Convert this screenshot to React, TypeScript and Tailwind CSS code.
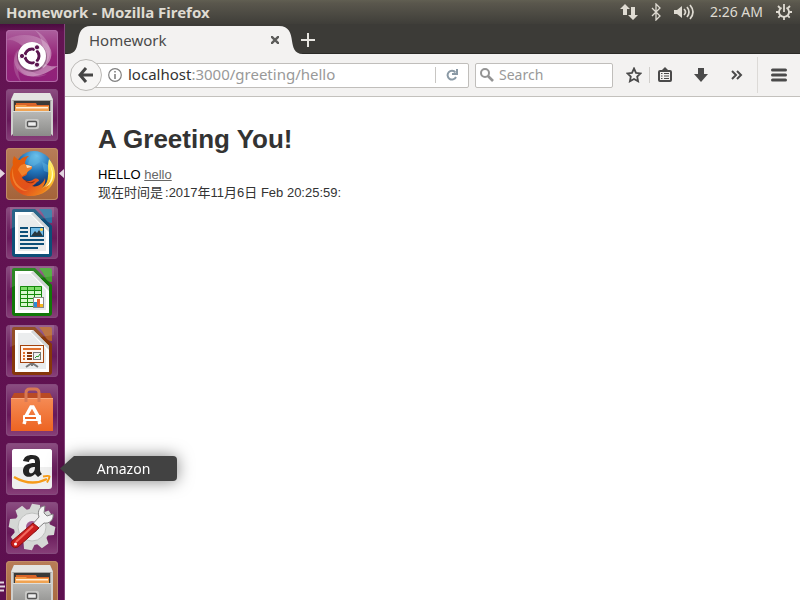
import type { ReactNode } from "react";

const UI = "font-['Noto_Sans','Noto_Sans_CJK_SC',sans-serif]";

function Files() {
  return (
    <svg viewBox="0 0 52 52" className="size-full">
      <defs>
        <linearGradient id="cab" x1="0" y1="0" x2="0" y2="1">
          <stop offset="0" stopColor="#b9b9b7" />
          <stop offset="1" stopColor="#8b8b89" />
        </linearGradient>
      </defs>
      <path d="M8 4h36l3 6v35H5V10z" fill="#a5a5a3" />
      <path d="M8 4h36l3 7H5z" fill="#e4e4e2" />
      <path d="M8 12h36v12H8z" fill="#3a3a38" />
      <path d="M10 14h20l1 2h12v8H9z" fill="#d9652a" />
      <path d="M9 16h11l1 1h22v7H9z" fill="#f39a45" />
      <path d="M10 18h32v1.500H10z" fill="#fff0dc" />
      <path d="M9 20h34v3H9z" fill="#f0a352" />
      <path d="M7 22h38v25H7z" fill="url(#cab)" />
      <path d="M7 22h38v1H7z" fill="#dededc" />
      <path d="M5 10v37l2-2V12zM47 10v37l-2-2V12z" fill="#cfcfcd" />
      <rect x="19" y="30" width="14" height="10" rx="2" fill="#c9c9c7" />
      <rect x="21.500" y="32.500" width="9" height="5" rx="1" fill="#eee" stroke="#555" strokeWidth="1.400" />
    </svg>
  );
}

function Ubuntu() {
  return (
    <svg viewBox="0 0 52 52" className="size-full">
      <defs>
        <linearGradient id="swirl" x1="0" y1="0" x2="1" y2="1">
          <stop offset="0" stopColor="#fff" stopOpacity=".08" />
          <stop offset="1" stopColor="#fff" stopOpacity=".5" />
        </linearGradient>
      </defs>
      <path d="M0 10C17 0 40 6 45 20c2 8-3 15-8 18L18 18C13 12 6 9 0 10z" fill="url(#swirl)" />
      <path d="M29 0c9 5 15 13 15 22 0 8-5 14-11 17l4-21C36 10 34 5 29 0z" fill="#fff" opacity=".22" />
      <path d="M8 28c0 12 9 20 21 18 9-1 15-5 23-10-9 1-14-1-19-7L13 19c-3 2-5 5-5 9z" fill="url(#swirl)" />
      <path d="M15 52C6 43 5 27 14 19l8 19c5 6 13 8 19 6-9 6-23 3-29-6 0 5 1 9 3 14z" fill="#fff" opacity=".16" />
      <circle cx="26" cy="27" r="15" fill="#35092c" opacity=".35" />
      <circle cx="26" cy="26" r="14" fill="#fff" />
      <circle cx="26" cy="26" r="7" fill="none" stroke="#5b1550" strokeWidth="3" />
      <path d="M26 26 15 26M26 26l6-10M26 26l6 10" stroke="#fff" strokeWidth="1.500" />
      <circle cx="26" cy="26" r="5.200" fill="#fff" />
      <g fill="#5b1550" stroke="#fff" strokeWidth="1">
        <circle cx="16" cy="26" r="2.600" />
        <circle cx="31" cy="17.300" r="2.600" />
        <circle cx="31" cy="34.700" r="2.600" />
      </g>
    </svg>
  );
}

function Firefox() {
  return (
    <svg viewBox="0 0 52 52" className="size-full">
      <defs>
        <radialGradient id="globe" cx=".55" cy=".15" r=".8">
          <stop offset="0" stopColor="#6fc5ef" />
          <stop offset=".5" stopColor="#2273b8" />
          <stop offset="1" stopColor="#102b61" />
        </radialGradient>
        <linearGradient id="fox" x1="0" y1="0" x2="1" y2="1">
          <stop offset="0" stopColor="#e66000" />
          <stop offset=".6" stopColor="#e2501c" />
          <stop offset="1" stopColor="#f39a1e" />
        </linearGradient>
        <linearGradient id="tail" x1="0" y1="0" x2="0" y2="1">
          <stop offset="0" stopColor="#fff27a" />
          <stop offset=".5" stopColor="#ffd335" />
          <stop offset="1" stopColor="#ee7c1b" />
        </linearGradient>
      </defs>
      <circle cx="28" cy="22" r="19" fill="url(#globe)" />
      <path d="M25 7c5 0 9 3 9 7l-6 4-6-2zM36 14l6 3 2 8-6-2z" fill="#5bb3df" opacity=".5" />
      <path d="M43 11c6 7 8 17 4 24-5 10-16 15-27 11 15-2 22-9 22-18 1-6-1-9 1-17z" fill="url(#tail)" />
      <path d="M8 8c2 2 4 4 6 4 3-3 6-4 9-4-3 2-4 5-4 8 2 2 6 1 7 3 1 2-5 4-5 6 0 3-3 3-5 4 1 4 7 6 12 2 3-1 5 0 5 2-2 0-4 4-7 5 5 2 12-3 13-8 1 4-1 8-4 11 3-1 7-4 9-9 0 9-9 16-20 16C13 48 3 38 4 26c0-4 2-7 3-9-1-3 0-6 1-9z" fill="url(#fox)" />
      <path d="M19 16c2 2 6 1 7 3 1 2-5 4-5 6l-5 3-4-6c1-4 4-6 7-6z" fill="#f0812a" />
      <path d="M18 31c4 4 8 4 12 1l-3 3c-4 1-7 0-9-4z" fill="#8f2e12" />
      <path d="M7 20c-1 12 5 20 15 23-8 1-19-8-15-23z" fill="#f7933b" opacity=".7" />
      <path d="M20 17c3 0 5 1 6 2l-5 1z" fill="#ffe0b8" />
      <path d="M44 17c4 9 1 18-5 22 8-2 11-13 5-22z" fill="#fffbb5" />
    </svg>
  );
}

function Sheet({ edge, fold, children }: { edge: string; fold: string; children: ReactNode }) {
  return (
    <svg viewBox="0 0 52 52" className="size-full">
      <path d="M8 2h21l17 17v28q0 3-3 3H9q-3 0-3-3V4q0-2 2-2z" fill={edge} />
      <path d="M33 2h11q2 0 2 2v12q-5 0-7-5t-6-9z" fill={fold} />
      <path d="M9 5h18l16 16v26H9z" fill="#fff" />
      <path d="M12 8h13l15 16v20H12z" fill="#e9ebec" />
      <path d="M27 5l16 16v4L25 7z" fill="#cfd3d4" />
      {children}
      <path d="M4 0h44v10Q26 12 4 22z" fill="#fff" opacity=".12" />
    </svg>
  );
}

function Writer() {
  return (
    <Sheet edge="#0d4f78" fold="#2a75a2">
      <path d="M14 21h8M14 25h8M14 29h8M14 33h24M14 37h24M14 41h18" stroke="#0d4f78" strokeWidth="2" />
      <rect x="24.500" y="20.500" width="13" height="9" fill="#74bce6" stroke="#0d4f78" />
      <path d="M25 29l4-5 2 2 2-3 4 6z" fill="#29383e" />
      <circle cx="35.500" cy="22.500" r="1.500" fill="#ffd24a" />
    </Sheet>
  );
}

function Calc() {
  return (
    <Sheet edge="#127709" fold="#43a52e">
      <rect x="14" y="20" width="22" height="20" fill="#d8f7cf" />
      <path d="M14 20h22v4H14z" fill="#80dd6b" />
      <path d="M14.500 20.500h21v20h-21zM14 24.500h22M14 28.500h22M14 32.500h22M14 36.500h22M21.500 20v20M28.500 20v20" fill="none" stroke="#16890c" />
      <rect x="27.500" y="31.500" width="10" height="10" fill="#fff" stroke="#888" />
      <path d="M28 36h3v5h-3z" fill="#2b8bd8" />
      <path d="M31 33h3v8h-3z" fill="#e8602c" />
      <path d="M34 38h3v3h-3z" fill="#f3b81f" />
    </Sheet>
  );
}

function Impress() {
  return (
    <Sheet edge="#86370b" fold="#b3622c">
      <path d="M26 38v3M20 42l6-4 6 4" fill="none" stroke="#777" strokeWidth="2" />
      <rect x="14.500" y="20.500" width="23" height="17" fill="#fff6ef" stroke="#a3430d" />
      <path d="M17 24h18" stroke="#e0702c" strokeWidth="2" />
      <path d="M17 28h2M17 31h2M17 34h2" stroke="#e0702c" strokeWidth="2" />
      <path d="M21 28h5M21 31h5M21 34h5" stroke="#86370b" strokeWidth="2" />
      <rect x="27.500" y="27.500" width="7" height="7" fill="#eee" stroke="#777" />
      <path d="M29 33l2-2 1 1 2-3" fill="none" stroke="#2d9c2d" />
    </Sheet>
  );
}

function Software() {
  return (
    <svg viewBox="0 0 52 52" className="size-full">
      <defs>
        <linearGradient id="bag" x1="0" y1="0" x2="0" y2="1">
          <stop offset="0" stopColor="#f58b55" />
          <stop offset="1" stopColor="#ed6422" />
        </linearGradient>
      </defs>
      <path d="M8 9h36l3 6H5z" fill="#b94a24" />
      <path d="M5 14h42v33H5z" fill="url(#bag)" />
      <path d="M5 14h42v1H5z" fill="#f8a77c" />
      <path d="M20 18V9q0-4 4-4h5q4 0 4 4v9" fill="none" stroke="#d77854" strokeWidth="3" />
      <path d="M20 32l5-9h2l5 9M19 37l-1 3M33 37l1 3" fill="none" stroke="#fff" strokeWidth="3.500" />
      <rect x="17" y="31" width="18" height="6" rx="1" fill="#fff" />
      <path d="M19 34h11" stroke="#ed6422" strokeWidth="2" />
    </svg>
  );
}

function Amazon() {
  return (
    <svg viewBox="0 0 52 52" className="size-full">
      <rect x="6" y="6" width="40" height="40" rx="3" fill="#efefef" />
      <path d="M6 24V9q0-3 3-3h34q3 0 3 3v15z" fill="#fff" />
      <path d="M17 18c1-4 4-6 9-6 6 0 8 3 8 7v8c0 2 1 3 2 4l-4 3c-1-1-2-2-3-3-5 5-12 3-12-3s5-8 12-8c0-3 0-4-3-4-2 0-3 1-3 3zM29 24c-4 0-6 1-6 4 0 4 6 3 6-4z" fill="#242424" fillRule="evenodd" />
      <path d="M8 34q17 10 33 2" fill="none" stroke="#f69b18" strokeWidth="2.500" />
      <path d="M37 33.500q6-1 6.500 0 0 2-2.500 6" fill="none" stroke="#f69b18" strokeWidth="2" />
    </svg>
  );
}

const teeth = [0, 45, 90, 135, 180, 225, 270, 315];

function Settings() {
  return (
    <svg viewBox="0 0 52 52" className="size-full">
      <g fill="#d5d7d5">
        {teeth.map((a) => (
          <path key={a} d="M22 2h8l3 11H19z" transform={`rotate(${a + 10} 26 25)`} />
        ))}
        <circle cx="26" cy="25" r="18" />
      </g>
      <circle cx="26" cy="25" r="14" fill="#ececec" stroke="#bfc1bf" />
      <circle cx="26" cy="25" r="6" fill="#a05b92" />
      <path d="M24 25l9-10c-2-6 1-11 6-11l-1 7 3 3 6-2c1 6-4 10-9 9L28 30z" fill="#f4f4f4" stroke="#858585" />
      <path d="M27 21l6 5-21 19q-4 2-6-1t0-5z" fill="#ca1d1d" stroke="#8f1010" />
      <path d="M27 24L10 40" stroke="#f26a5f" strokeWidth="2" />
      <circle cx="9.500" cy="42" r="1.500" fill="#fff" />
    </svg>
  );
}

const glass = "bg-[linear-gradient(#8c4f82,#702563_40%,#68195a_60%,#884079)] inset-ring-[#864a7d]";
const brown = "bg-[linear-gradient(#b87d58,#a46339)] inset-ring-[#c08b68]";
const launchers = [
  { name: "Search your computer", icon: <Ubuntu />, look: "bg-[linear-gradient(#ad609e,#942477_50%,#90217a)] inset-ring-[#b169a6]" },
  { name: "Files", icon: <Files />, look: glass },
  { name: "Firefox", icon: <Firefox />, look: brown, active: true },
  { name: "Writer", icon: <Writer />, look: glass },
  { name: "Calc", icon: <Calc />, look: glass },
  { name: "Impress", icon: <Impress />, look: glass },
  { name: "Software", icon: <Software />, look: glass },
  { name: "Amazon", icon: <Amazon />, look: glass, tip: "Amazon" },
  { name: "System Settings", icon: <Settings />, look: glass },
  { name: "File manager", icon: <Files />, look: brown, many: true },
];

function Launcher() {
  return (
    <nav className="relative z-10 w-[65px] shrink-0 border-r border-[#85457b] bg-[linear-gradient(#4b0b40,#641453_8px,#5d104f)] pt-1.5">
      <ul className="flex flex-col gap-[7px]">
        {launchers.map((l) => (
          <li key={l.name} className="relative px-1.5">
            <button aria-label={l.name} className={`block size-[52px] overflow-hidden rounded inset-ring ${l.look}`}>
              {l.icon}
            </button>
            {l.active && (
              <svg className="absolute inset-0 h-[52px] w-16" viewBox="0 0 64 52" fill="#e3d6e0">
                <path d="M0 21l5 4.500L0 30zM64 21l-5 4.500 5 4.500z" />
              </svg>
            )}
            {l.many && (
              <svg className="absolute inset-0 h-[52px] w-1.5" viewBox="0 0 6 52">
                <path d="M0 21.500h4M0 25.500h5M0 29.500h4" stroke="#e3d6e0" strokeWidth="2" />
              </svg>
            )}
            {l.tip && (
              <div role="tooltip" className="absolute top-[13px] left-[60px] flex h-[25px] w-[117px] drop-shadow-[0_0_8px_rgba(0,0,0,0.5)]">
                <svg className="h-full w-3.5 shrink-0" viewBox="0 0 14 25" fill="#424242">
                  <path d="M14 0v25L0 12.500z" />
                </svg>
                <span className="flex-1 rounded-r bg-[#424242] pr-1 text-center text-sm leading-[25px] text-white">{l.tip}</span>
              </div>
            )}
          </li>
        ))}
      </ul>
    </nav>
  );
}

function TopBar() {
  return (
    <header className="flex h-6 shrink-0 items-center bg-[linear-gradient(#615f52,#5a574d_3px,#3f3e39)] pr-2 pl-1.5 text-sm text-[#dfdbd2]">
      <h1 className="text-[15px] leading-5 font-bold">Homework - Mozilla Firefox</h1>
      <div className="ml-auto flex items-center">
        <svg className="mr-3 h-[18px] w-[18px]" viewBox="0 0 18 18" fill="currentColor" aria-label="Network">
          <path d="M5 1L0 6h3v6h4V6h3zM13 17l5-5h-3V4h-4v8H8z" />
        </svg>
        <svg className="mr-3 h-[18px] w-3" viewBox="0 0 12 18" fill="none" stroke="currentColor" strokeWidth="1.300" aria-label="Bluetooth">
          <path d="M2 5l8 8-4 4V1l4 4-8 8" />
        </svg>
        <svg className="mr-4 h-[18px] w-5" viewBox="0 0 20 18" aria-label="Sound">
          <path d="M0 7h3l5-4v12l-5-4H0z" fill="currentColor" />
          <path d="M10 6q3 3 0 6M13 4q4 5 0 10M16 2q6 7 0 14" fill="none" stroke="currentColor" strokeWidth="1.700" />
        </svg>
        <time className="mr-[13px]">2:26 AM</time>
        <svg className="size-4" viewBox="0 0 16 16" fill="none" stroke="currentColor" aria-label="Session">
          <path d="M5.500 3.600a5 5 0 1 0 5 0M8 0v8" strokeWidth="1.800" />
          <path d="M0 8h3M13 8h3M8 13v3M2 2l2 2M14 2l-2 2M2.300 13.700l2-2M13.700 13.700l-2-2" strokeWidth="1.800" />
        </svg>
      </div>
    </header>
  );
}

function TabStrip() {
  return (
    <div className="flex h-[30px] items-end border-b border-[#2a2a27] bg-[#3c3b37] pl-0.5">
      <svg className="-mb-px h-7 w-6 shrink-0" viewBox="0 0 24 28">
        <path d="M0 28c9 0 10-7 11-13C12 7 14 0 24 0v28z" fill="#f3f2f1" />
      </svg>
      <div className="-mb-px flex h-7 w-[188px] items-center justify-between bg-[#f3f2f1] text-[15px] text-[#4a4a4a]">
        <span className="-ml-0.5">Homework</span>
        <button aria-label="Close tab">
          <svg className="size-2" viewBox="0 0 8 8" stroke="#5c5c5a" strokeWidth="2.400">
            <path d="M0 0l8 8M8 0L0 8" />
          </svg>
        </button>
      </div>
      <svg className="-mb-px h-7 w-6 shrink-0" viewBox="0 0 24 28">
        <path d="M24 28c-9 0-10-7-11-13C12 7 10 0 0 0v28z" fill="#f3f2f1" />
      </svg>
      <button aria-label="New tab" className="mb-1.5 -ml-0.5">
        <svg className="size-3.5" viewBox="0 0 14 14" stroke="#e8e6e1" strokeWidth="2">
          <path d="M7 0v14M0 7h14" />
        </svg>
      </button>
    </div>
  );
}

function Toolbar() {
  return (
    <div className="flex h-[43px] items-center border-b border-[#c3c1bd] bg-[#f3f2f1] pr-[13px] pl-[5px] text-sm text-[#4a4a4a]">
      <button aria-label="Back" className="z-1 flex size-8 shrink-0 items-center justify-center rounded-full border border-[#bcbab7] bg-[#f6f5f4]">
        <svg className="h-4 w-4" viewBox="0 0 16 16" fill="none" stroke="#454545" strokeWidth="3">
          <path d="M8 1L2 8l6 7M2 8h13" />
        </svg>
      </button>
      <div className="-ml-2 flex h-[25px] min-w-0 flex-1 items-center rounded-r-xs border border-[#c0bebb] bg-white pl-[13px]">
        <svg className="size-3.5 shrink-0" viewBox="0 0 14 14" fill="none" stroke="#808080" aria-label="Site information">
          <circle cx="7" cy="7" r="6.300" strokeWidth="1.200" />
          <path d="M7 3v1.600M7 6v5" strokeWidth="1.600" />
        </svg>
        <div role="textbox" aria-label="Address" className="ml-1.5 min-w-0 flex-1 truncate text-[15px] text-[#999]">
          <span className="text-[#333]">localhost</span>:3000/greeting/hello
        </div>
        <button aria-label="Reload" className="flex h-4 w-[33px] items-center justify-center border-l border-[#c8c6c3]">
          <svg className="size-3" viewBox="0 0 12 12" fill="none" stroke="#8a99a5" strokeWidth="2">
            <path d="M9.500 3.500A4.400 4.400 0 1 0 10 8M11 0v5H6" />
          </svg>
        </button>
      </div>
      <label className="ml-1.5 flex h-[25px] w-[138px] shrink-0 items-center rounded-xs border border-[#c0bebb] bg-white pl-1">
        <svg className="size-3.5 shrink-0" viewBox="0 0 14 14" fill="none" stroke="#949494" strokeWidth="2">
          <circle cx="5" cy="5" r="4" />
          <path d="M8 8l5 5" strokeWidth="2.600" />
        </svg>
        <input aria-label="Search" placeholder="Search" className="ml-[5px] w-full min-w-0 outline-none placeholder:text-[#999]" />
      </label>
      <button aria-label="Bookmark" className="ml-[13px]">
        <svg className="size-4" viewBox="0 0 16 16" fill="none" stroke="#4a4a4a" strokeWidth="1.800">
          <path d="M8 1.500l2 4.300 4.600.6-3.400 3.200.9 4.700L8 12l-4.100 2.300.9-4.700L1.400 6.400 6 5.800z" />
        </svg>
      </button>
      <span className="ml-[7px] h-4 w-px bg-[#d0cecb]" />
      <button aria-label="Bookmarks list" className="ml-2">
        <svg className="h-4 w-3.5" viewBox="0 0 14 16" fill="none" stroke="#4a4a4a" strokeWidth="2">
          <path d="M2 4h10q1 0 1 1v8q0 1-1 1H2q-1 0-1-1V5q0-1 1-1z" />
          <path d="M4 3l3-3 3 3z" fill="#4a4a4a" stroke="none" />
          <path d="M3 6.500h1.500M6 6.500h5M3 9h1.500M6 9h5M3 11.500h1.500M6 11.500h5" strokeWidth="1.200" />
        </svg>
      </button>
      <button aria-label="Downloads" className="ml-[22px]">
        <svg className="size-3.5" viewBox="0 0 14 14" fill="#4a4a4a">
          <path d="M4 0h6v6h4l-7 8-7-8h4z" />
        </svg>
      </button>
      <button aria-label="More tools" className="ml-[23px]">
        <svg className="h-2.5 w-3" viewBox="0 0 12 10" fill="none" stroke="#4a4a4a" strokeWidth="2">
          <path d="M1 1l4 4-4 4M6 1l4 4-4 4" />
        </svg>
      </button>
      <span className="ml-3.5 h-9 w-px bg-[#dcdad7]" />
      <button aria-label="Open menu" className="ml-[13px]">
        <svg className="h-3.5 w-4" viewBox="0 0 16 14" stroke="#4a4a4a" strokeWidth="3" strokeLinecap="round">
          <path d="M1.500 2h13M1.500 7h13M1.500 12h13" />
        </svg>
      </button>
    </div>
  );
}

export default function App() {
  return (
    <div className={`flex h-screen flex-col overflow-hidden bg-white ${UI}`}>
      <TopBar />
      <div className="flex min-h-0 flex-1">
        <Launcher />
        <div className="flex min-w-0 flex-1 flex-col">
          <TabStrip />
          <Toolbar />
          <main className="px-[33px] pt-6 font-['Liberation_Sans','Noto_Sans_CJK_SC',sans-serif] text-[13px] leading-[18px] text-[#333]">
            <h2 className="mb-[9px] text-[26px] leading-9 font-bold">A Greeting You!</h2>
            <p className="text-black">
              HELLO <a href="#hello" className="text-[#666] underline">hello</a>
            </p>
            <p>
              现在时间是<span className="ml-0.5">:</span>2017年11月6日 Feb 20:25:59:
            </p>
          </main>
        </div>
      </div>
    </div>
  );
}
